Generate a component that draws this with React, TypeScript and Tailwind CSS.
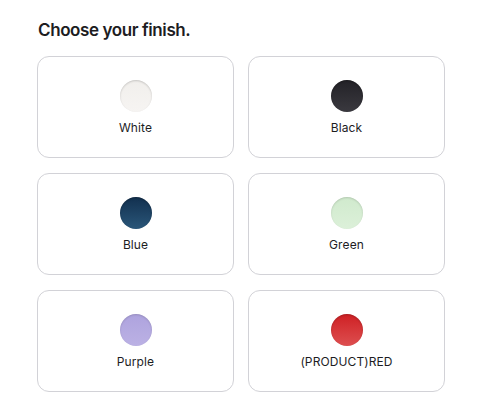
import React from "react";

const items = [
  { name: "White", bg: "bg-[linear-gradient(180deg,#f1efec,#f6f4f2)]", ring: "shadow-[inset_0_1px_2px_rgba(0,0,0,0.18)]" },
  { name: "Black", bg: "bg-[linear-gradient(180deg,#232227,#3a393f)]", ring: "shadow-[inset_0_1px_2px_rgba(0,0,0,0.3)]" },
  { name: "Blue", bg: "bg-[linear-gradient(180deg,#12304f,#2a5679)]", ring: "shadow-[inset_0_1px_2px_rgba(0,0,0,0.25)]" },
  { name: "Green", bg: "bg-[linear-gradient(180deg,#d0eacd,#dcf0d9)]", ring: "shadow-[inset_0_1px_2px_rgba(0,0,0,0.15)]" },
  { name: "Purple", bg: "bg-[linear-gradient(180deg,#aea3de,#bbb1e4)]", ring: "shadow-[inset_0_1px_2px_rgba(0,0,0,0.15)]" },
  { name: "(PRODUCT)RED", bg: "bg-[linear-gradient(180deg,#cf2024,#dd4f50)]", ring: "shadow-[inset_0_1px_2px_rgba(0,0,0,0.2)]" },
];

export default function App() {
  return (
    <div className="w-[501px] h-[400px] bg-white font-['Inter','Liberation_Sans',sans-serif] text-[#1d1d1f]">
      <div className="pl-[37px] pt-[18px]">
        <h2 className="pl-[1px] text-[17px] leading-[24px] font-semibold tracking-[-0.4px]">Choose your finish.</h2>
        <div className="mt-[14px] grid grid-cols-[197px_197px] gap-x-[14px] gap-y-[15px]">
          {items.map((it) => (
            <div
              key={it.name}
              className="h-[102px] rounded-[12px] border border-[#d2d2d7] flex flex-col items-center pt-[23px]"
            >
              <div className={`w-[32px] h-[32px] rounded-full ${it.bg} ${it.ring}`} />
              <div className="mt-[8px] text-[12px] leading-[16px] tracking-[0.1px]">{it.name}</div>
            </div>
          ))}
        </div>
      </div>
    </div>
  );
}
